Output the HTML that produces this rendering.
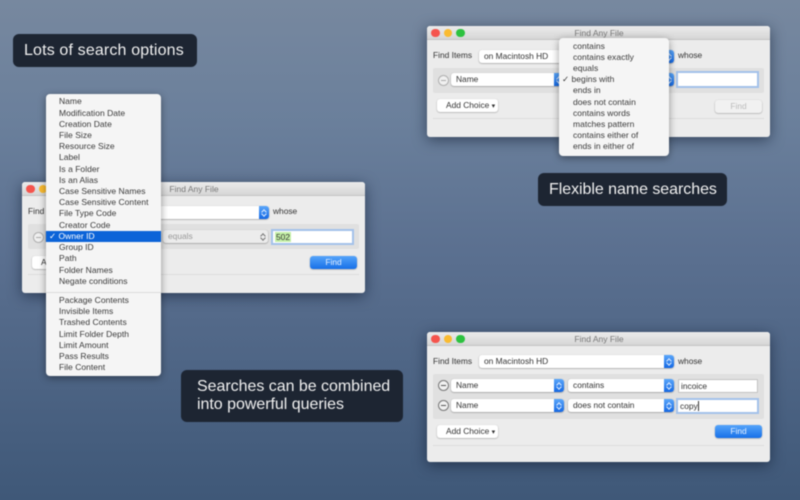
<!DOCTYPE html>
<html>
<head>
<meta charset="utf-8">
<style>
html,body{margin:0;padding:0;}
body{width:800px;height:500px;overflow:hidden;position:relative;background:linear-gradient(#77889f 0%,#6a7f9b 25%,#5b7090 50%,#4d6484 75%,#3f5878 100%);font-family:"Liberation Sans",sans-serif;color:#333;}
#wrap{position:absolute;left:0;top:0;width:800px;height:500px;filter:blur(.4px);}
.abs,.win,.lab,.menu,.pop,.fld,.btn,.panel,.tl,.t,.sep,.min,.step{position:absolute;}
.win{width:343px;background:#ececec;border-radius:3px;box-shadow:0 3px 14px rgba(10,20,40,.55);}
.tb{position:absolute;left:0;top:0;right:0;height:13px;background:linear-gradient(#ebebeb,#d6d6d6);border-radius:3px 3px 0 0;border-bottom:1px solid #c4c4c4;}
.title{position:absolute;left:1px;right:0;top:1.5px;text-align:center;font-size:8.5px;line-height:11px;color:#777;letter-spacing:0;}
.tl{width:8.5px;height:8.5px;border-radius:50%;top:2.6px;}
.r{left:4.4px;background:#f5544d;}.y{left:16.9px;background:#fabb30;}.g{left:29.4px;background:#2cc23f;}
.t{font-size:8.4px;line-height:11px;white-space:nowrap;letter-spacing:0;color:#333;}
.panel{background:#e0e0e0;border-radius:2px;}
.pop{background:#fff;border-radius:3px;box-shadow:0 .5px 1.5px rgba(0,0,0,.4);font-size:8.4px;line-height:13px;letter-spacing:0;color:#333;white-space:nowrap;text-indent:5px;overflow:hidden;}
.step{right:0;top:0;bottom:0;width:10.5px;background:linear-gradient(#5aa6fa,#1468e4);text-indent:0;}
.step:before,.step:after{content:"";position:absolute;left:3.2px;width:3px;height:3px;border:solid #dcebff;border-width:1px 0 0 1px;transform:rotate(45deg);}
.step:before{top:3.5px;}
.step:after{bottom:3.5px;transform:rotate(225deg);}
.dis{color:#999;}
.dis .step{background:transparent;}
.dis .step:before,.dis .step:after{border-color:#777;}
.fld{background:#fff;box-shadow:0 0 0 .7px #b5b5b5;font-size:8.4px;line-height:13px;letter-spacing:0;text-indent:2px;color:#333;}
.foc{box-shadow:0 0 0 2px #a3c1ea;}
.min{width:9px;height:9px;border-radius:50%;border:1px solid #777;background:#f0f0f0;}
.min:after{content:"";position:absolute;left:2px;right:2px;top:4px;height:1px;background:#555;}
.min.off{border-color:#b0b0b0;}
.min.off:after{background:#aaa;}
.btn{background:#fff;border-radius:3px;box-shadow:0 .5px 1.5px rgba(0,0,0,.35);font-size:8.4px;line-height:13px;letter-spacing:0;color:#333;text-align:center;white-space:nowrap;}
.add{text-align:left;text-indent:9px;}
.blue{background:linear-gradient(#55a4fa,#1770e8);color:#e4efff;}
.ghost{background:#f1f1f1;color:#bbb;}
.sep{height:1px;background:#dcdcdc;}
.menu{background:#f5f5f5;border-radius:4px;box-shadow:0 2px 8px rgba(0,0,0,.4);}
.menu div{position:absolute;left:0;right:0;height:11.2px;line-height:11.2px;font-size:8.5px;letter-spacing:.03px;color:#3a3a3a;white-space:nowrap;}
.lab{background:#1d2532;border-radius:6px;color:#f0f0f0;font-size:16px;letter-spacing:0;line-height:20px;white-space:nowrap;}
.lab span{position:absolute;}
</style>
</head>
<body>
<div id="wrap">

<!-- Window A -->
<div class="win" style="left:22px;top:182px;height:111px;">
  <div class="tb"><div class="tl r"></div><div class="tl y"></div><div class="tl g"></div><div class="title">Find Any File</div></div>
  <div class="t" style="left:6px;top:24px;">Find Items</div>
  <div class="pop" style="left:52px;top:24px;width:195px;height:13px;">on Macintosh HD<div class="step"></div></div>
  <div class="t" style="left:251px;top:24px;">whose</div>
  <div class="panel" style="left:6px;top:42px;width:331px;height:25px;"></div>
  <div class="min off" style="left:11px;top:50px;"></div>
  <div class="pop" style="left:24px;top:48px;width:113px;height:13px;">Owner ID<div class="step"></div></div>
  <div class="pop dis" style="left:141px;top:48px;width:105px;height:13px;background:#ececec;">equals<div class="step"></div></div>
  <div class="fld foc" style="left:251px;top:49px;width:79px;height:12px;"><span style="background:#c4f0a8;padding:0 1px;">502</span></div>
  <div class="btn add" style="left:10px;top:74px;width:61px;height:13px;">Add Choice <span style="font-size:7px;">▾</span></div>
  <div class="btn blue" style="left:288px;top:74px;width:47px;height:13px;">Find</div>
  <div class="sep" style="left:6px;top:92px;width:331px;"></div>
</div>

<!-- Window B -->
<div class="win" style="left:427px;top:26px;height:111px;">
  <div class="tb"><div class="tl r"></div><div class="tl y"></div><div class="tl g"></div><div class="title">Find Any File</div></div>
  <div class="t" style="left:6px;top:24px;">Find Items</div>
  <div class="pop" style="left:52px;top:24px;width:195px;height:13px;">on Macintosh HD<div class="step"></div></div>
  <div class="t" style="left:251px;top:24px;">whose</div>
  <div class="panel" style="left:6px;top:42px;width:331px;height:25px;"></div>
  <div class="min off" style="left:11px;top:49px;"></div>
  <div class="pop" style="left:24px;top:47px;width:113px;height:13px;">Name<div class="step"></div></div>
  <div class="pop" style="left:141px;top:47px;width:106px;height:13px;">begins with<div class="step"></div></div>
  <div class="fld foc" style="left:251px;top:47px;width:79px;height:13px;"></div>
  <div class="btn add" style="left:10px;top:73px;width:61px;height:13px;">Add Choice <span style="font-size:7px;">▾</span></div>
  <div class="btn ghost" style="left:288px;top:74px;width:47px;height:13px;">Find</div>
  <div class="sep" style="left:6px;top:92px;width:331px;"></div>
</div>

<!-- Window C -->
<div class="win" style="left:427px;top:332px;height:130px;">
  <div class="tb"><div class="tl r"></div><div class="tl y"></div><div class="tl g"></div><div class="title">Find Any File</div></div>
  <div class="t" style="left:6px;top:24px;">Find Items</div>
  <div class="pop" style="left:52px;top:23px;width:195px;height:13px;">on Macintosh HD<div class="step"></div></div>
  <div class="t" style="left:251px;top:24px;">whose</div>
  <div class="panel" style="left:6px;top:42px;width:331px;height:45px;"></div>
  <div class="min" style="left:11px;top:48px;"></div>
  <div class="pop" style="left:24px;top:47px;width:113px;height:13px;">Name<div class="step"></div></div>
  <div class="pop" style="left:141px;top:47px;width:106px;height:13px;">contains<div class="step"></div></div>
  <div class="fld" style="left:252px;top:48px;width:78px;height:12px;">incoice</div>
  <div class="min" style="left:11px;top:68px;"></div>
  <div class="pop" style="left:24px;top:67px;width:113px;height:13px;">Name<div class="step"></div></div>
  <div class="pop" style="left:141px;top:67px;width:106px;height:13px;">does not contain<div class="step"></div></div>
  <div class="fld foc" style="left:251px;top:68px;width:79px;height:12px;">copy<span style="border-left:1px solid #333;"></span></div>
  <div class="btn add" style="left:10px;top:93px;width:61px;height:13px;">Add Choice <span style="font-size:7px;">▾</span></div>
  <div class="btn blue" style="left:288px;top:93px;width:47px;height:13px;">Find</div>
  <div class="sep" style="left:6px;top:113px;width:331px;"></div>
</div>

<!-- Menu A -->
<div class="menu" style="left:46px;top:94px;width:115px;height:282px;">
  <div style="top:2.4px;text-indent:13px;">Name</div>
  <div style="top:13.6px;text-indent:13px;">Modification Date</div>
  <div style="top:24.8px;text-indent:13px;">Creation Date</div>
  <div style="top:36px;text-indent:13px;">File Size</div>
  <div style="top:47.2px;text-indent:13px;">Resource Size</div>
  <div style="top:58.4px;text-indent:13px;">Label</div>
  <div style="top:69.6px;text-indent:13px;">Is a Folder</div>
  <div style="top:80.8px;text-indent:13px;">Is an Alias</div>
  <div style="top:92px;text-indent:13px;">Case Sensitive Names</div>
  <div style="top:103.2px;text-indent:13px;">Case Sensitive Content</div>
  <div style="top:114.4px;text-indent:13px;">File Type Code</div>
  <div style="top:125.6px;text-indent:13px;">Creator Code</div>
  <div style="top:137px;height:11px;line-height:11px;background:#0b63d8;color:#fff;text-indent:3px;">✓&nbsp;Owner ID</div>
  <div style="top:148.2px;text-indent:13px;">Group ID</div>
  <div style="top:159.4px;text-indent:13px;">Path</div>
  <div style="top:170.6px;text-indent:13px;">Folder Names</div>
  <div style="top:181.8px;text-indent:13px;">Negate conditions</div>
  <div style="top:197.6px;height:1px;background:#dcdcdc;"></div>
  <div style="top:201px;text-indent:13px;">Package Contents</div>
  <div style="top:212.2px;text-indent:13px;">Invisible Items</div>
  <div style="top:223.4px;text-indent:13px;">Trashed Contents</div>
  <div style="top:234.6px;text-indent:13px;">Limit Folder Depth</div>
  <div style="top:245.8px;text-indent:13px;">Limit Amount</div>
  <div style="top:257px;text-indent:13px;">Pass Results</div>
  <div style="top:268.2px;text-indent:13px;">File Content</div>
</div>

<!-- Menu B -->
<div class="menu" style="left:559px;top:38px;width:110px;height:118px;">
  <div style="top:2.6px;text-indent:14px;">contains</div>
  <div style="top:13.8px;text-indent:14px;">contains exactly</div>
  <div style="top:25px;text-indent:14px;">equals</div>
  <div style="top:36.2px;text-indent:3px;">✓&nbsp;begins with</div>
  <div style="top:47.4px;text-indent:14px;">ends in</div>
  <div style="top:58.6px;text-indent:14px;">does not contain</div>
  <div style="top:69.8px;text-indent:14px;">contains words</div>
  <div style="top:81px;text-indent:14px;">matches pattern</div>
  <div style="top:92.2px;text-indent:14px;">contains either of</div>
  <div style="top:103.4px;text-indent:14px;">ends in either of</div>
</div>

<!-- Labels -->
<div class="lab" style="left:13px;top:34px;width:184px;height:33px;letter-spacing:.15px;"><span style="left:11px;top:7px;">Lots of search options</span></div>
<div class="lab" style="left:538px;top:173px;width:189px;height:33px;letter-spacing:-.05px;"><span style="left:11px;top:7px;">Flexible name searches</span></div>
<div class="lab" style="left:181px;top:370px;width:222px;height:52px;letter-spacing:-.03px;"><span style="left:16px;top:6.5px;">Searches can be combined</span><span style="left:16px;top:24.5px;">into powerful queries</span></div>

</div>
</body>
</html>
